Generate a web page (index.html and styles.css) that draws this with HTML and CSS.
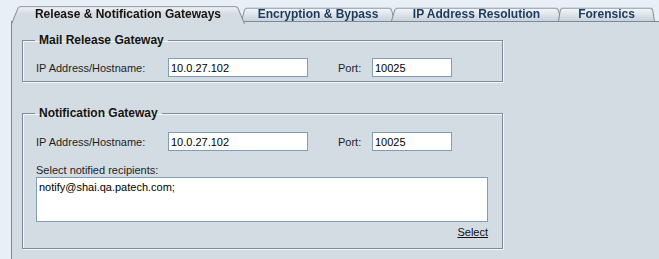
FILE: index.html
```html
<!DOCTYPE html>
<html lang="en">
<head>
    <meta charset="UTF-8">
    <title>Gateways</title>
    <link rel="stylesheet" href="styles.css">
</head>
<body>
    <div class="tabs">
        <div class="tab active">Release &amp; Notification Gateways</div>
        <div class="tab tab-enc">Encryption &amp; Bypass</div>
        <div class="tab tab-ip">IP Address Resolution</div>
        <div class="tab tab-for">Forensics</div>
    </div>
    <div class="panel">
        <fieldset class="group group-mail">
            <legend>Mail Release Gateway</legend>
            <div class="row">
                <label class="lbl-host">IP Address/Hostname:</label>
                <input class="field host" type="text" value="10.0.27.102">
                <label class="lbl-port">Port:</label>
                <input class="field port" type="text" value="10025">
            </div>
        </fieldset>
        <fieldset class="group group-notify">
            <legend>Notification Gateway</legend>
            <div class="row">
                <label class="lbl-host">IP Address/Hostname:</label>
                <input class="field host" type="text" value="10.0.27.102">
                <label class="lbl-port">Port:</label>
                <input class="field port" type="text" value="10025">
            </div>
            <div class="recipients">
                <label>Select notified recipients:</label>
                <textarea class="field list">notify@shai.qa.patech.com;</textarea>
                <a class="select-link" href="#">Select</a>
            </div>
        </fieldset>
    </div>
</body>
</html>
```

FILE: styles.css
```css
body {
    margin: 0;
    background: #e9eff6;
    font-family: "Liberation Sans", Arial, sans-serif;
    font-size: 11px;
    color: #1e1e1e;
    padding-left: 11px;
    padding-top: 6px;
    height: 253px;
    overflow: hidden;
}

/* tab strip */
.tabs {
    display: flex;
    height: 15px;
    position: relative;
    z-index: 1;
}

.tab {
    position: relative;
    font-weight: bold;
    font-size: 12px;
    line-height: 16px;
    text-align: center;
    color: #1c3a5d;
    margin-right: -4px;
}

.tab::before {
    content: '';
    position: absolute;
    left: 0;
    right: 0;
    top: 1px;
    bottom: 0;
    z-index: -1;
    border: 1px solid #7d8a99;
    border-bottom: none;
    border-radius: 3px 3px 0 0;
    background: linear-gradient(#f3f6f9, #dfe5eb 45%, #c9d2db);
    transform: perspective(30px) rotateX(6deg);
    transform-origin: bottom;
}

.tab.active {
    width: 234px;
    color: #1a1410;
    z-index: 2;
    height: 17px;
    margin-top: -1px;
    line-height: 18px;
}

.tab.active::before {
    top: 0;
    bottom: -2px;
    background: linear-gradient(#eef2f6, #d4dce3 40%);
}

.tab-enc { width: 154px; }
.tab-ip { width: 171px; }
.tab-for { width: 97px; }

/* main panel */
.panel {
    background: #d4dce3;
    border-left: 1px solid #7d8a99;
    border-top: 1px solid #7d8a99;
    height: 225px;
    padding: 12px 0 0 10px;
}

.group {
    width: 466px;
    margin: 0;
    padding: 0 0 0 13px;
    border: 1px solid #7d8a99;
    box-shadow: inset 1px 1px 0 #f4f7fa, 1px 1px 0 #f4f7fa;
}

.group legend {
    font-weight: bold;
    font-size: 12px;
    padding: 0 4px;
    margin-left: -1px;
    line-height: 13px;
    color: #15140f;
}

.group-mail {
    height: 46px;
}

.group-notify {
    margin-top: 25px;
    height: 140px;
}

.group-notify .row {
    margin-top: 12px;
}

.row {
    display: flex;
    align-items: center;
    margin-top: 11px;
}

.lbl-host { width: 132px; }
.lbl-port { margin-left: 30px; width: 34px; }

.field {
    border: 1px solid #7f9db9;
    background: #fff;
    font-family: "Liberation Sans", Arial, sans-serif;
    font-size: 11px;
    color: #000;
    padding: 0 2px;
    box-sizing: border-box;
    height: 19px;
    margin: 0;
}

.host { width: 140px; }
.port { width: 80px; }

.recipients {
    display: flex;
    flex-direction: column;
    margin-top: 12px;
    width: 452px;
}

.recipients label {
    line-height: 14px;
}

.list {
    height: 45px;
    resize: none;
    padding: 3px 2px 2px;
    width: 452px;
}

.select-link {
    align-self: flex-end;
    color: #111;
    margin-top: 3px;
    line-height: 14px;
}
```
